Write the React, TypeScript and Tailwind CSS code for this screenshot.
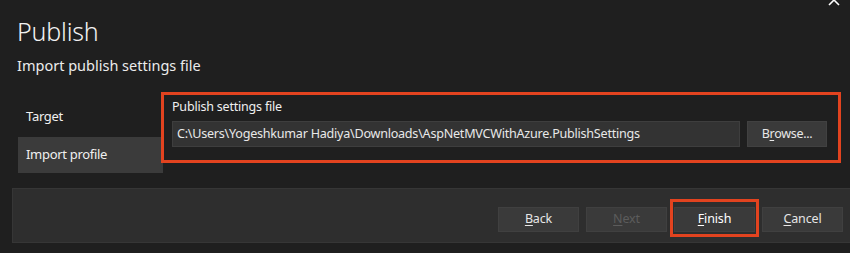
import React from "react";

const U = ({ c }: { c: string }) => <span className="underline underline-offset-[2px] decoration-1">{c}</span>;

function Btn({ children, disabled, bright }: { children: React.ReactNode; disabled?: boolean; bright?: boolean }) {
  return (
    <div
      className={
        "w-[81px] h-[25px] flex items-center justify-center text-[12.5px] tracking-[-0.15px] bg-[#3a3a3a] border border-[#404040] " +
        (disabled ? "text-[#5c5c5c] bg-[#2f2f2f] border-[#383838]" : bright ? "text-white" : "text-[#e6e6e6]")
      }
    >
      {children}
    </div>
  );
}

export default function App() {
  return (
    <div
      className="relative w-[850px] h-[253px] bg-[#1f1f1f] text-[#f0f0f0] overflow-hidden"
      style={{ fontFamily: '"Noto Sans", "Open Sans", sans-serif' }}
    >
      <svg className="absolute left-[826px] top-[-6px]" width="16" height="12" viewBox="0 0 16 12">
        <path d="M2 0 L8 6 L14 0" stroke="#ffffff" strokeWidth="1.6" fill="none" />
        <path d="M8 6 L3 11 M8 6 L13 11" stroke="#ffffff" strokeWidth="1.6" fill="none" />
      </svg>
      <div className="pl-[17px] pt-[13px]">
        <h1 className="text-[25px] tracking-[-0.2px] font-light leading-[36px] text-[#f2f2f2]">Publish</h1>
        <p className="text-[14.5px] leading-[20px] mt-[6px] text-[#ececec]">Import publish settings file</p>
      </div>
      <div className="flex mt-[17px]">
        <div className="w-[145px] ml-[18px] pt-[7px] flex flex-col gap-[2px] text-[13px] tracking-[-0.3px]">
          <div className="h-[36px] flex items-center pl-[8px]">Target</div>
          <div className="h-[36px] flex items-center pl-[8px] bg-[#3b3b3b]">Import profile</div>
        </div>
        <div className="ml-[-2px] w-[680px] h-[71px] border-[3px] border-[#e2431f] pl-[8px] pt-[3px] pr-[10px]">
          <div className="text-[12.5px] tracking-[-0.2px] leading-[18px] text-[#f0f0f0]">Publish settings file</div>
          <div className="flex gap-[7px] mt-[5px]">
            <div className="w-[568px] h-[26px] bg-[#333333] border border-[#3e3e3e] flex items-center pl-[4px] text-[12.6px] tracking-[-0.25px] text-[#e8e8e8] whitespace-nowrap overflow-hidden">
              C:\Users\Yogeshkumar Hadiya\Downloads\AspNetMVCWithAzure.PublishSettings
            </div>
            <div className="w-[80px] h-[26px] bg-[#3a3a3a] border border-[#414141] flex items-center justify-center text-[12.5px] tracking-[-0.3px] text-[#e8e8e8]">
              <span>B<U c="r" />owse...</span>
            </div>
          </div>
        </div>
      </div>
      <div className="ml-[12px] mt-[15px] h-[55px] bg-[#2e2e2e] border border-[#363636] border-r-0 flex justify-end items-start pt-[18px] pr-[7px] gap-[7px]">
        <Btn><span><U c="B" />ack</span></Btn>
        <Btn disabled><span><U c="N" />ext</span></Btn>
        <div className="relative">
          <Btn bright><span><U c="F" />inish</span></Btn>
          <div className="absolute left-[-4px] right-[-4px] top-[-8px] bottom-[-5px] border-[3px] border-[#e2431f]" />
        </div>
        <Btn><span><U c="C" />ancel</span></Btn>
      </div>
    </div>
  );
}
